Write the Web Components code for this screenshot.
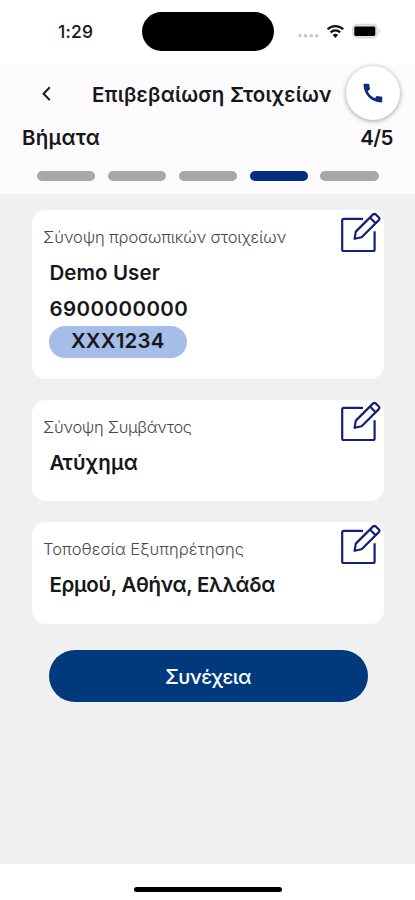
<!DOCTYPE html>
<html lang="el">
<head>
<meta charset="utf-8">
<title>Επιβεβαίωση Στοιχείων</title>
<style>
  body {
    margin: 0;
    font-family: Inter, "Noto Sans", sans-serif;
    color: #17171a;
  }
</style>
</head>
<body>
<claim-screen></claim-screen>

<script>
  class StatusBar extends HTMLElement {
    constructor() {
      super();
      this.attachShadow({ mode: 'open' });
      this.shadowRoot.innerHTML = `
        <style>
          :host {
            display: grid;
            grid-template-columns: 142px 132px 1fr;
            height: 64px;
            box-sizing: border-box;
            padding-top: 12px;
            background: #fff;
          }
          .time {
            padding: 9px 0 0 58px;
            font-size: 17.5px;
            line-height: 21px;
            font-weight: 500;
            letter-spacing: 0.2px;
          }
          .island {
            height: 39px;
            border-radius: 20px;
            background: #000;
          }
          svg { display: block; }
        </style>
        <div class="time">1:29</div>
        <div class="island"></div>
        <svg width="141" height="39" viewBox="274 12 141 39">
          <g fill="#c9c9cb">
            <circle cx="300" cy="35.8" r="1.8"/>
            <circle cx="305.5" cy="35.8" r="1.8"/>
            <circle cx="311.2" cy="35.8" r="1.8"/>
            <circle cx="316.8" cy="35.8" r="1.8"/>
          </g>
          <g fill="none" stroke="#111" stroke-width="2.3">
            <path d="M327.6 29.3a11 11 0 0 1 15.6 0"/>
            <path d="M330.7 32.4a6.6 6.6 0 0 1 9.4 0"/>
          </g>
          <path d="M335.4 37.9l-2.7-2.9a4 4 0 0 1 5.4 0z" fill="#111"/>
          <rect x="352.7" y="24.3" width="24.6" height="13.6" rx="4.2" fill="#e4e4e5" stroke="#d6d6d7" stroke-width="1.1"/>
          <rect x="354.3" y="26.5" width="21" height="9.4" rx="1.4" fill="#000"/>
          <path d="M378.8 28.8q3.4 2.4 0 4.8z" fill="#cfcfd0"/>
        </svg>
      `;
    }
  }

  class PageHeader extends HTMLElement {
    constructor() {
      super();
      this.attachShadow({ mode: 'open' });
      this.shadowRoot.innerHTML = `
        <style>
          :host {
            display: block;
            position: relative;
            height: 130px;
            background: #fefbff;
            font-weight: 600;
            font-size: 20.5px;
          }
          .bar {
            display: flex;
            align-items: center;
            height: 60px;
            padding-left: 40px;
          }
          .title {
            margin-left: 38px;
            white-space: nowrap;
          }
          .steps {
            display: flex;
            justify-content: space-between;
            padding: 1.5px 22px 0;
            line-height: 24px;
          }
          .call {
            position: absolute;
            left: 346px;
            top: 2px;
            width: 54px;
            height: 54px;
            border-radius: 50%;
            background: #fff;
            box-shadow: 0 1px 5px rgba(0, 0, 0, 0.38);
          }
          svg { display: block; flex: none; }
        </style>
        <div class="bar">
          <svg width="14" height="18" viewBox="0 0 14 18">
            <path d="M9.8 2.3L3.6 8.7l6.2 6.4" fill="none" stroke="#18181b" stroke-width="2"/>
          </svg>
          <div class="title"><slot name="title"></slot></div>
        </div>
        <div class="steps">
          <slot name="label"></slot>
          <slot name="count"></slot>
        </div>
        <slot></slot>
        <div class="call">
          <svg width="54" height="54" viewBox="0 0 54 54">
            <path transform="translate(14.4 14.6) scale(1.04)" fill="#0d2c80" d="M20.01 15.38c-1.23 0-2.42-.2-3.53-.56a.98.98 0 0 0-1.01.24l-1.57 1.97c-2.83-1.35-5.48-3.9-6.89-6.83l1.95-1.66c.27-.28.35-.67.24-1.02-.37-1.11-.56-2.3-.56-3.53 0-.54-.45-.99-.99-.99H4.19C3.65 3 3 3.24 3 3.99 3 13.28 10.73 21 20.01 21c.71 0 .99-.63.99-1.18v-3.45c0-.54-.45-.99-.99-.99z"/>
          </svg>
        </div>
      `;
    }
  }

  class StepBar extends HTMLElement {
    constructor() {
      super();
      this.attachShadow({ mode: 'open' });
    }

    connectedCallback() {
      this.render();
    }

    render() {
      const total = parseInt(this.getAttribute('total')) || 5;
      const current = parseInt(this.getAttribute('current')) || 1;
      let items = '';
      for (let i = 1; i <= total; i++) {
        items += `<i class="${i === current ? 'on' : ''}"></i>`;
      }

      this.shadowRoot.innerHTML = `
        <style>
          :host {
            display: flex;
            gap: 12.6px;
            padding: 21px 36.5px 0 37.2px;
          }
          i {
            flex: 1;
            height: 10.5px;
            border-radius: 6px;
            background: #a8a8aa;
          }
          .on { background: #01317b; }
        </style>
        ${items}
      `;
    }
  }

  class SummaryCard extends HTMLElement {
    constructor() {
      super();
      this.attachShadow({ mode: 'open' });
      this.shadowRoot.innerHTML = `
        <style>
          :host {
            display: flex;
            justify-content: space-between;
            box-sizing: border-box;
            min-height: 101.5px;
            padding: 0 3px 0 11px;
            border-radius: 14px;
            background: #fff;
          }
          .heading {
            padding-top: 15px;
            font-size: 16.5px;
            line-height: 24px;
            font-weight: 300;
            white-space: nowrap;
            color: #48484b;
          }
          .values {
            padding: 6px 0 0 6.4px;
            font-size: 20.5px;
            line-height: 36px;
            font-weight: 600;
            white-space: nowrap;
          }
          svg { display: block; flex: none; margin-top: 1.5px; }
        </style>
        <div>
          <div class="heading"><slot name="heading"></slot></div>
          <div class="values"><slot></slot></div>
        </div>
        <svg width="42" height="42" viewBox="0 0 42 42" fill="none" stroke="#14207a" stroke-width="2.2" stroke-linejoin="round">
          <path d="M24 6.8H4.8Q3.2 6.8 3.2 8.4V37.4Q3.2 39 4.8 39H34Q35.6 39 35.6 37.4V19.2"/>
          <path d="M15.6 26.8L16.8 19.6L34.1 2.4Q35.4 1.2 36.7 2.4L39.9 5.5Q41 6.8 39.8 8.1L22.6 25.2Z"/>
          <path d="M31 5.5l5.8 5.9"/>
        </svg>
      `;
    }
  }

  class PlateTag extends HTMLElement {
    constructor() {
      super();
      this.attachShadow({ mode: 'open' });
      this.shadowRoot.innerHTML = `
        <style>
          :host {
            display: block;
            width: 138px;
            height: 31.5px;
            margin: -1px 0 0 -0.6px;
            border-radius: 16px;
            background: #a5bee9;
            text-align: center;
            line-height: 29.5px;
            letter-spacing: 0.2px;
          }
        </style>
        <slot></slot>
      `;
    }
  }

  class PrimaryButton extends HTMLElement {
    constructor() {
      super();
      this.attachShadow({ mode: 'open' });
      this.shadowRoot.innerHTML = `
        <style>
          :host { display: block; }
          button {
            display: block;
            width: 100%;
            height: 52px;
            border: 0;
            border-radius: 26px;
            background: #003a7d;
            color: #fff;
            font: 500 20px/54px Inter, "Noto Sans", sans-serif;
            letter-spacing: -0.55px;
            padding: 0;
          }
        </style>
        <button><slot></slot></button>
      `;
    }
  }

  class HomeIndicator extends HTMLElement {
    constructor() {
      super();
      this.attachShadow({ mode: 'open' });
      this.shadowRoot.innerHTML = `
        <style>
          :host {
            display: flex;
            justify-content: center;
            height: 36px;
            background: #fff;
          }
          div {
            width: 148px;
            height: 5px;
            margin-top: 22.5px;
            border-radius: 3px;
            background: #000;
          }
        </style>
        <div></div>
      `;
    }
  }

  class ClaimScreen extends HTMLElement {
    constructor() {
      super();
      this.attachShadow({ mode: 'open' });
      this.shadowRoot.innerHTML = `
        <style>
          :host {
            display: flex;
            flex-direction: column;
            width: 415px;
            height: 900px;
            overflow: hidden;
          }
          main {
            flex: 1;
            display: flex;
            flex-direction: column;
            gap: 21.2px;
            padding: 16px 31px 0 32px;
            background: #f0f0f0;
          }
          .person { height: 168.5px; }
          primary-button { margin: 5px 16.5px 0 16.5px; }
          .title { letter-spacing: 0.2px; }
          .label { letter-spacing: 0.25px; }
          .count { letter-spacing: -0.5px; }
          .about-person { letter-spacing: -0.15px; }
          .about-event { letter-spacing: -0.35px; }
          .about-place { letter-spacing: 0.05px; }
          .name { letter-spacing: 0.1px; }
          .phone { letter-spacing: 0.45px; }
          .event { letter-spacing: 0.2px; }
          .place { letter-spacing: -0.3px; }
        </style>
        <status-bar></status-bar>
        <page-header>
          <span slot="title" class="title">Επιβεβαίωση Στοιχείων</span>
          <span slot="label" class="label">Βήματα</span>
          <span slot="count" class="count">4/5</span>
          <step-bar total="5" current="4"></step-bar>
        </page-header>
        <main>
          <summary-card class="person">
            <span slot="heading" class="about-person">Σύνοψη προσωπικών στοιχείων</span>
            <div class="name">Demo User</div>
            <div class="phone">6900000000</div>
            <plate-tag>XXX1234</plate-tag>
          </summary-card>
          <summary-card>
            <span slot="heading" class="about-event">Σύνοψη Συμβάντος</span>
            <div class="event">Ατύχημα</div>
          </summary-card>
          <summary-card>
            <span slot="heading" class="about-place">Τοποθεσία Εξυπηρέτησης</span>
            <div class="place">Ερμού, Αθήνα, Ελλάδα</div>
          </summary-card>
          <primary-button>Συνέχεια</primary-button>
        </main>
        <home-indicator></home-indicator>
      `;
    }
  }

  customElements.define('status-bar', StatusBar);
  customElements.define('step-bar', StepBar);
  customElements.define('page-header', PageHeader);
  customElements.define('summary-card', SummaryCard);
  customElements.define('plate-tag', PlateTag);
  customElements.define('primary-button', PrimaryButton);
  customElements.define('home-indicator', HomeIndicator);
  customElements.define('claim-screen', ClaimScreen);
</script>
</body>
</html>
